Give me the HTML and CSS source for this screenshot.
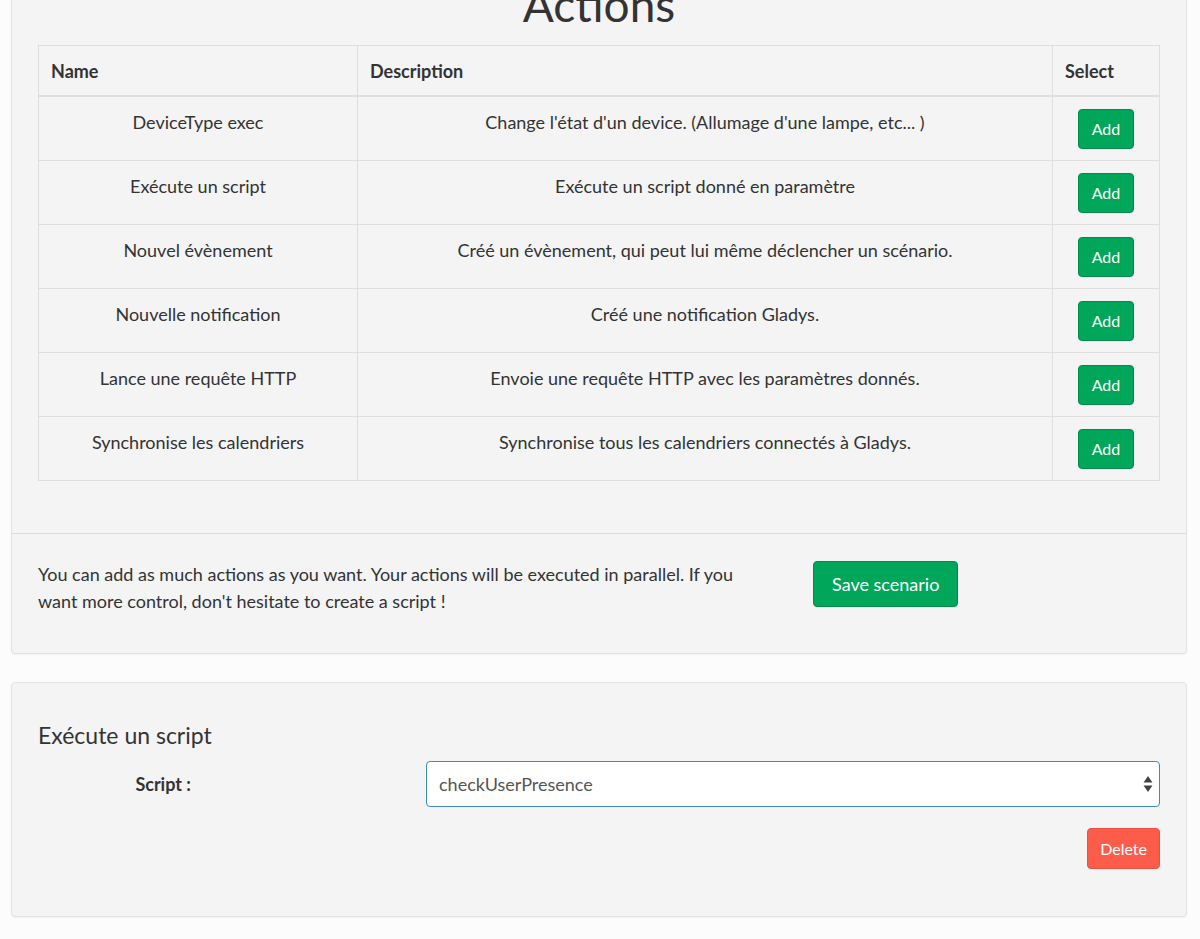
FILE: index.html
```html
<!DOCTYPE html>
<html lang="fr">
<head>
<meta charset="utf-8">
<title>Actions</title>
<link rel="stylesheet" href="styles.css">
</head>
<body>
<section class="box box-actions">
  <div class="box-body">
    <h1 class="box-title-big">Actions</h1>
    <table class="actions-table">
      <colgroup>
        <col class="col-name">
        <col class="col-desc">
        <col class="col-select">
      </colgroup>
      <thead>
        <tr><th>Name</th><th>Description</th><th>Select</th></tr>
      </thead>
      <tbody>
        <tr><td>DeviceType exec</td><td>Change l'état d'un device. (Allumage d'une lampe, etc... )</td><td><button class="btn btn-success btn-sm">Add</button></td></tr>
        <tr><td>Exécute un script</td><td>Exécute un script donné en paramètre</td><td><button class="btn btn-success btn-sm">Add</button></td></tr>
        <tr><td>Nouvel évènement</td><td>Créé un évènement, qui peut lui même déclencher un scénario.</td><td><button class="btn btn-success btn-sm">Add</button></td></tr>
        <tr><td>Nouvelle notification</td><td>Créé une notification Gladys.</td><td><button class="btn btn-success btn-sm">Add</button></td></tr>
        <tr><td>Lance une requête HTTP</td><td>Envoie une requête HTTP avec les paramètres donnés.</td><td><button class="btn btn-success btn-sm">Add</button></td></tr>
        <tr><td>Synchronise les calendriers</td><td>Synchronise tous les calendriers connectés à Gladys.</td><td><button class="btn btn-success btn-sm">Add</button></td></tr>
      </tbody>
    </table>
  </div>
  <div class="box-footer">
    <p class="footer-text">You can add as much actions as you want. Your actions will be executed in parallel. If you want more control, don't hesitate to create a script !</p>
    <div class="footer-action"><button class="btn btn-success">Save scenario</button></div>
  </div>
</section>

<section class="box box-script">
  <h3 class="box-title">Exécute un script</h3>
  <div class="form-row">
    <label class="form-label">Script :</label>
    <div class="select">
      <span class="select-value">checkUserPresence</span>
      <svg class="select-arrows" width="10" height="18" viewBox="0 0 10 18"><path d="M5 1 L9.5 7.5 H0.5 Z" fill="#444"/><path d="M5 17 L9.5 10.5 H0.5 Z" fill="#444"/></svg>
    </div>
  </div>
  <div class="form-actions">
    <button class="btn btn-danger btn-sm">Delete</button>
  </div>
</section>
</body>
</html>
```
FILE: styles.css
```css
html, body {
  margin: 0;
  padding: 0;
}
body {
  background: #fcfcfc;
  font-family: "Lato", "Liberation Sans", sans-serif;
  font-size: 18px;
  line-height: 27px;
  color: #333;
}
.box {
  margin: 0 13px 28px 11px;
  background: #f4f4f4;
  border: 1px solid #e2e2e2;
  border-radius: 4px;
  box-shadow: 0 1px 1px rgba(0,0,0,0.04);
}
.box-actions {
  margin-top: -40px;
}
.box-body {
  padding: 19px 26px 52px;
}
.box-title-big {
  margin: 0 0 15px;
  font-size: 46px;
  line-height: 50px;
  font-weight: 400;
  text-align: center;
  color: #333;
}
.actions-table {
  width: 1121px;
  border-collapse: collapse;
  table-layout: fixed;
}
.col-name { width: 319px; }
.col-desc { width: 695px; }
.col-select { width: 107px; }
.actions-table th,
.actions-table td {
  border: 1px solid #dedede;
  padding: 12px 12px 11px;
  vertical-align: top;
}
.actions-table th {
  text-align: left;
  font-weight: 700;
  padding: 12px 12px 10px;
  border-bottom: 2px solid #dedede;
}
.actions-table td {
  text-align: center;
}
.btn {
  font-family: inherit;
  display: inline-block;
  border: 1px solid transparent;
  border-radius: 4px;
  color: #fff;
  cursor: pointer;
  font-size: 18px;
  line-height: 28px;
  padding: 8px 18px;
}
.btn-sm {
  font-size: 16px;
  line-height: 24px;
  padding: 7px 13px;
}
.btn-success {
  background: #00a65a;
  border-color: #008d4c;
}
.btn-danger {
  background: #fd5c4b;
  border-color: #ec4f3f;
}
.box-footer {
  border-top: 1px solid #dcdcdc;
  padding: 27px 26px 25px;
  display: grid;
  grid-template-columns: 720px auto;
  column-gap: 55px;
  align-items: start;
}
.footer-text {
  margin: 0 0 13px;
}
.footer-action .btn {
  display: block;
}
.box-script {
  padding: 38px 26px 47px;
}
.box-title {
  margin: 0 0 12px;
  font-size: 23px;
  line-height: 28px;
  font-weight: 400;
}
.form-row {
  display: grid;
  grid-template-columns: 153px 1fr;
  column-gap: 235px;
  align-items: center;
}
.form-label {
  text-align: right;
  font-weight: 700;
}
.select {
  box-sizing: border-box;
  height: 46px;
  border: 1px solid #3c8dbc;
  border-radius: 4px;
  background: #fff;
  display: flex;
  align-items: center;
  justify-content: space-between;
  padding: 0 6px 0 12px;
  color: #555;
  font-size: 18px;
}
.select-arrows {
  display: block;
}
.form-actions {
  margin-top: 21px;
  display: flex;
  justify-content: flex-end;
}
.form-actions .btn {
  padding: 7px 12px;
  line-height: 25px;
}
```
